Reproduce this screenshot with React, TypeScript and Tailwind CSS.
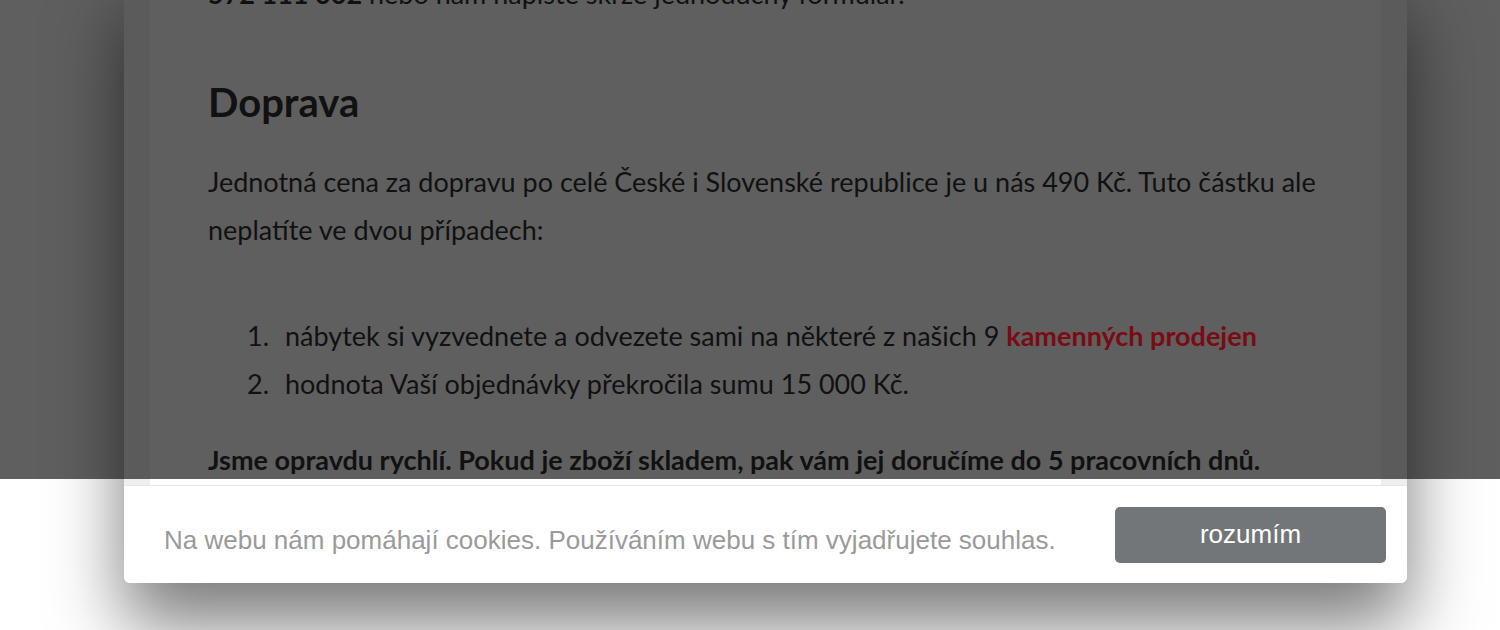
const items = [
    {
        n: '1.',
        text: (
            <>
                nábytek si vyzvednete a odvezete sami na některé z našich 9{' '}
                <a className="font-bold text-[#7a0b13]">kamenných prodejen</a>
            </>
        ),
    },
    { n: '2.', text: <>hodnota Vaší objednávky překročila sumu 15 000 Kč.</> },
];

export default function App() {
    return (
        <div className="w-[1500px] h-[630px] overflow-hidden bg-[linear-gradient(to_bottom,#5f5f5f_479px,#ffffff_479px)] font-['Lato',sans-serif]">
            <div className="ml-[124px] mt-[-30px] w-[1283px] rounded-b-[6px] overflow-hidden shadow-[0_42px_72px_rgba(0,0,0,0.52)]">
                <div className="h-[516px] px-[26px] border-b border-[#e6e6e6] bg-[linear-gradient(to_bottom,#5b5b5b_509px,#efefef_509px)]">
                    <div className="h-full pl-[58px] text-[27px] leading-[48px] text-[#111111] bg-[linear-gradient(to_bottom,#5f5f5f_509px,#ffffff_509px)]">
                        <p>
                            <b>572 111 002</b> nebo nám napište skrze jednoduchý formulář.
                        </p>
                        <h2 className="mt-[60px] text-[40px] leading-[48px] font-bold">Doprava</h2>
                        <p className="mt-[32px]">
                            Jednotná cena za dopravu po celé České i Slovenské republice je u nás 490 Kč. Tuto částku ale
                            <br />
                            neplatíte ve dvou případech:
                        </p>
                        <ol className="mt-[58px] pl-[39px]">
                            {items.map(({ n, text }) => (
                                <li key={n} className="flex">
                                    <span className="w-[38px] shrink-0">{n}</span>
                                    <span>{text}</span>
                                </li>
                            ))}
                        </ol>
                        <p className="mt-[28px] font-bold">
                            Jsme opravdu rychlí. Pokud je zboží skladem, pak vám jej doručíme do 5 pracovních dnů.
                        </p>
                    </div>
                </div>
                {/* cookie bar */}
                <div className="h-[97px] bg-white flex items-center justify-between pl-[40px] pr-[21px]">
                    <p className="pt-[12px] font-['Liberation_Sans',Arial,sans-serif] text-[26px] text-[#9a9a9a]">
                        Na webu nám pomáhají cookies. Používáním webu s tím vyjadřujete souhlas.
                    </p>
                    <button className="w-[271px] h-[56px] rounded-[5px] bg-[#727679] text-white font-['Liberation_Sans',Arial,sans-serif] text-[26px]">
                        rozumím
                    </button>
                </div>
            </div>
        </div>
    );
}
